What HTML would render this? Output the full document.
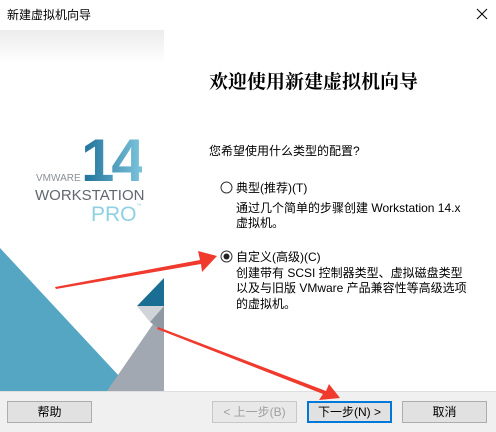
<!DOCTYPE html><html><head><meta charset="utf-8"><style>
*{margin:0;padding:0;box-sizing:border-box}
body{width:496px;height:432px;position:relative;background:#fff;font-family:"Liberation Sans","Noto Sans CJK SC",sans-serif;font-size:12px;color:#000;overflow:hidden}
.a{position:absolute;white-space:nowrap}
.btn{position:absolute;top:401px;height:22px;width:85px;background:#e1e1e1;border:1px solid #adadad;text-align:center;line-height:20px;font-size:12px}
</style></head><body>
<div class="a" style="left:7px;top:6px;font-size:12px">新建虚拟机向导</div>
<svg class="a" style="left:476px;top:8px" width="12" height="12"><path d="M1 1L11 11M11 1L1 11" stroke="#000" stroke-width="1"/></svg>
<div class="a" style="left:0;top:30px;width:164px;height:361px;background:linear-gradient(#ececec,#fff 34px)"></div>
<div class="a" style="left:81px;top:126px;font-size:60px;font-weight:bold;letter-spacing:-3px;background:linear-gradient(90deg,#1c6f98,#7cc4dc);-webkit-background-clip:text;color:transparent">14</div>
<div class="a" style="left:36px;top:173px;font-size:10px;color:#8a9096">VMWARE</div>
<div class="a" style="left:35px;top:187px;font-size:15px;color:#5f6870">WORKSTATION</div>
<div class="a" style="left:91px;top:203px;font-size:21px;color:#8fd0e4">PRO<span style="font-size:5px;vertical-align:top">™</span></div>
<svg class="a" style="left:0;top:240px" width="164" height="152">
<polygon points="0,8 133,151 0,151" fill="#54a6c3"/>
<polygon points="164,68 107,151 164,151" fill="#a1a8b1"/>
<polygon points="137,66 164,38 164,66" fill="#1a6d93"/>
<polygon points="137,66 164,66 150,82" fill="#d0d4d8"/>
<polygon points="150,82 164,66 164,92" fill="#8f99a3"/>
</svg>
<div class="a" style="left:209px;top:67px;font-size:19px;font-weight:bold;font-family:'Noto Serif CJK SC',serif">欢迎使用新建虚拟机向导</div>
<div class="a" style="left:209px;top:142px">您希望使用什么类型的配置?</div>
<svg class="a" style="left:220px;top:181px" width="13" height="13"><circle cx="6.5" cy="6.5" r="5.5" fill="#fff" stroke="#333"/></svg>
<div class="a" style="left:236px;top:179px">典型(推荐)(T)</div>
<div class="a" style="left:236px;top:199px">通过几个简单的步骤创建 Workstation 14.x</div>
<div class="a" style="left:236px;top:214px">虚拟机。</div>
<svg class="a" style="left:220px;top:250px" width="13" height="13"><circle cx="6.5" cy="6.5" r="5.5" fill="#fff" stroke="#333"/><circle cx="6.5" cy="6.5" r="3" fill="#222"/></svg>
<div class="a" style="left:236px;top:248px">自定义(高级)(C)</div>
<div class="a" style="left:236px;top:264px">创建带有 SCSI 控制器类型、虚拟磁盘类型</div>
<div class="a" style="left:236px;top:279px">以及与旧版 VMware 产品兼容性等高级选项</div>
<div class="a" style="left:236px;top:295px">的虚拟机。</div>
<div class="a" style="left:0;top:391px;width:496px;height:41px;background:#f0f0f0;border-top:1px solid #dfdfdf"></div>
<div class="btn" style="left:7px">帮助</div>
<div class="btn" style="left:212px;color:#a0a0a0;border-color:#c8c8c8;background:#e8e8e8">&lt; 上一步(B)</div>
<div class="btn" style="left:307px;border:2px solid #0078d7;line-height:18px">下一步(N) &gt;</div>
<div class="btn" style="left:402px">取消</div>
<svg class="a" style="left:0;top:0" width="496" height="432">
<polygon points="55,287 200,260 198,251 217,256 202,272 201,264 56,289" fill="#f03a2e"/>
<polygon points="158,327 326,391 329,384 340,398 319,400 323,394 157,329" fill="#f03a2e"/>
</svg>
</body></html>
